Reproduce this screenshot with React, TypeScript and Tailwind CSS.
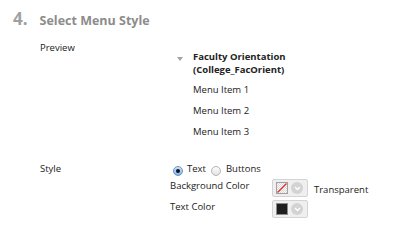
import React from "react";

function Radio({ checked }: { checked?: boolean }) {
  if (checked) {
    return (
      <span className="flex h-[10px] w-[10px] items-center justify-center rounded-full border border-[#6a93c4] bg-gradient-to-b from-[#cfe3f9] to-[#84b5ea]">
        <span className="h-[4px] w-[4px] rounded-full bg-[#111]" />
      </span>
    );
  }
  return <span className="block h-[10px] w-[10px] rounded-full border border-[#b4b4b4] bg-gradient-to-b from-[#fdfdfd] to-[#e2e2e2]" />;
}

function ColorPicker({ swatch }: { swatch: "transparent" | "black" }) {
  return (
    <div className="flex h-[18px] w-[36px] items-center gap-[3px] rounded-[2px] border border-[#d4d4d4] bg-[#efefef] pl-[3px]">
      {swatch === "black" ? (
        <span className="h-[12px] w-[12px] border border-[#8a8a8a] bg-[#1e1e1e]" />
      ) : (
        <svg width="12" height="12" viewBox="0 0 12 12">
          <defs>
            <pattern id="chk" width="2" height="2" patternUnits="userSpaceOnUse">
              <rect width="2" height="2" fill="#fafafa" />
              <rect width="1" height="1" fill="#d8d8d8" />
              <rect x="1" y="1" width="1" height="1" fill="#d8d8d8" />
            </pattern>
          </defs>
          <rect x="0.5" y="0.5" width="11" height="11" fill="url(#chk)" stroke="#a0a0a0" />
          <line x1="1.5" y1="10.5" x2="10.5" y2="1.5" stroke="#e8302c" strokeWidth="1.2" />
        </svg>
      )}
      <span className="flex h-[12px] w-[12px] items-center justify-center rounded-full bg-[#d3d3d3]">
        <svg width="7" height="5" viewBox="0 0 7 5">
          <path d="M1 1l2.5 2.5L6 1" stroke="#fff" strokeWidth="1.3" fill="none" />
        </svg>
      </span>
    </div>
  );
}

export default function App() {
  return (
    <div className="h-[242px] w-[400px] bg-white pl-[13px] pt-[9px] text-[9.5px] text-[#222] [font-family:'Open_Sans',sans-serif]">
      <div className="flex h-[20px] items-baseline gap-[12px] font-bold leading-[20px]">
        <span className="text-[17px] text-[#a0a0a0]">4.</span>
        <span className="text-[12.5px] text-[#8c8c8c]">Select Menu Style</span>
      </div>

      <div className="mt-[13px] flex">
        <div className="w-[163px] pl-[27px] leading-[12px]">Preview</div>
        <div className="mt-[8px] flex flex-col">
          <div className="flex">
            <span className="ml-[1px] mr-[10px] mt-[7px] h-0 w-0 border-x-[3.5px] border-t-[4px] border-x-transparent border-t-[#a3a3a3]" />
            <div className="font-bold leading-[13px]">
              Faculty Orientation
              <br />
              (College_FacOrient)
            </div>
          </div>
          <div className="ml-[17px] mt-[8px] flex flex-col gap-[9px] leading-[12px]">
            <span>Menu Item 1</span>
            <span>Menu Item 2</span>
            <span>Menu Item 3</span>
          </div>
        </div>
      </div>

      <div className="mt-[25px] flex">
        <div className="w-[157px] pl-[27px] leading-[12px]">Style</div>
        <div className="flex flex-col">
          <div className="flex items-start leading-[12px]">
            <span className="ml-[3px] mt-[3px]"><Radio checked /></span>
            <span className="ml-[4px]">Text</span>
            <span className="ml-[5px] mt-[3px]"><Radio /></span>
            <span className="ml-[5px]">Buttons</span>
          </div>
          <div className="mt-[3px] flex items-start">
            <span className="mt-[1px] w-[102px] leading-[12px]">Background Color</span>
            <ColorPicker swatch="transparent" />
            <span className="ml-[6px] mt-[5px] leading-[12px]">Transparent</span>
          </div>
          <div className="mt-[3px] flex items-start">
            <span className="mt-[1px] w-[102px] leading-[12px]">Text Color</span>
            <ColorPicker swatch="black" />
          </div>
        </div>
      </div>
    </div>
  );
}
